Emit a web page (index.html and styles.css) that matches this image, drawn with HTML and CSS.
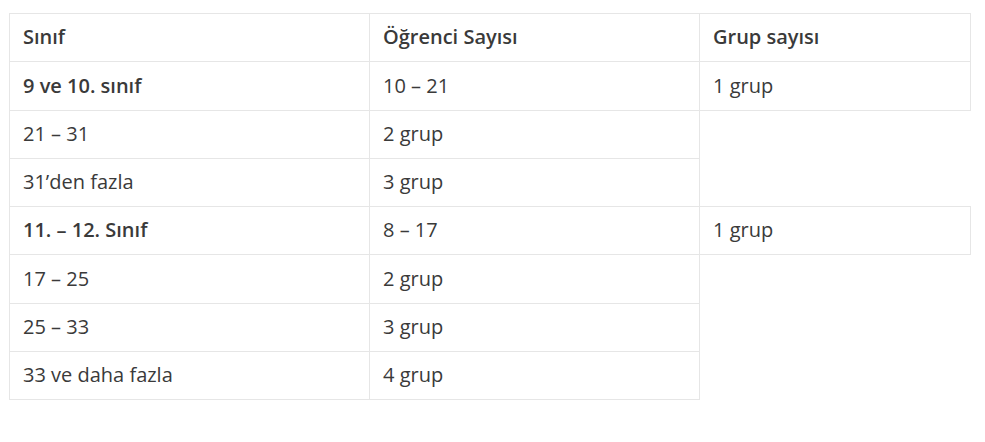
FILE: index.html
```html
<!DOCTYPE html>
<html lang="tr">
<head>
<meta charset="utf-8">
<link rel="stylesheet" href="styles.css">
</head>
<body>
<div class="wrap">
<table class="groups">
  <colgroup>
    <col class="c1"><col class="c2"><col class="c3">
  </colgroup>
  <tbody>
    <tr class="r48"><td class="head">Sınıf</td><td class="head">Öğrenci Sayısı</td><td class="head">Grup sayısı</td></tr>
    <tr class="r49"><td><strong>9 ve 10. sınıf</strong></td><td>10 – 21</td><td>1 grup</td></tr>
    <tr class="r48"><td>21 – 31</td><td>2 grup</td></tr>
    <tr class="r48"><td>31’den fazla</td><td>3 grup</td></tr>
    <tr class="r48"><td><strong>11. – 12. Sınıf</strong></td><td>8 – 17</td><td>1 grup</td></tr>
    <tr class="r49"><td>17 – 25</td><td>2 grup</td></tr>
    <tr class="r48"><td>25 – 33</td><td>3 grup</td></tr>
    <tr class="r48"><td>33 ve daha fazla</td><td>4 grup</td></tr>
  </tbody>
</table>
</div>
</body>
</html>
```
FILE: styles.css
```css
html, body {
  margin: 0;
  padding: 0;
  background: #ffffff;
}
.wrap {
  padding: 13px 0 0 9px;
}
.groups {
  border-collapse: collapse;
  table-layout: fixed;
  width: 961px;
  font-family: "Open Sans", "Noto Sans", sans-serif;
  font-size: 20px;
  color: #3a3a3a;
}
.c1 { width: 360px; }
.c2 { width: 330px; }
.c3 { width: 271px; }
.groups td {
  border: 1px solid #e6e6e6;
  padding: 0 13px 1px;
  vertical-align: middle;
  line-height: 26px;
  white-space: nowrap;
}
.r48 td { height: 46px; }
.r49 td { height: 47px; }
.groups td.head,
.groups strong {
  font-weight: 600;
}
```
